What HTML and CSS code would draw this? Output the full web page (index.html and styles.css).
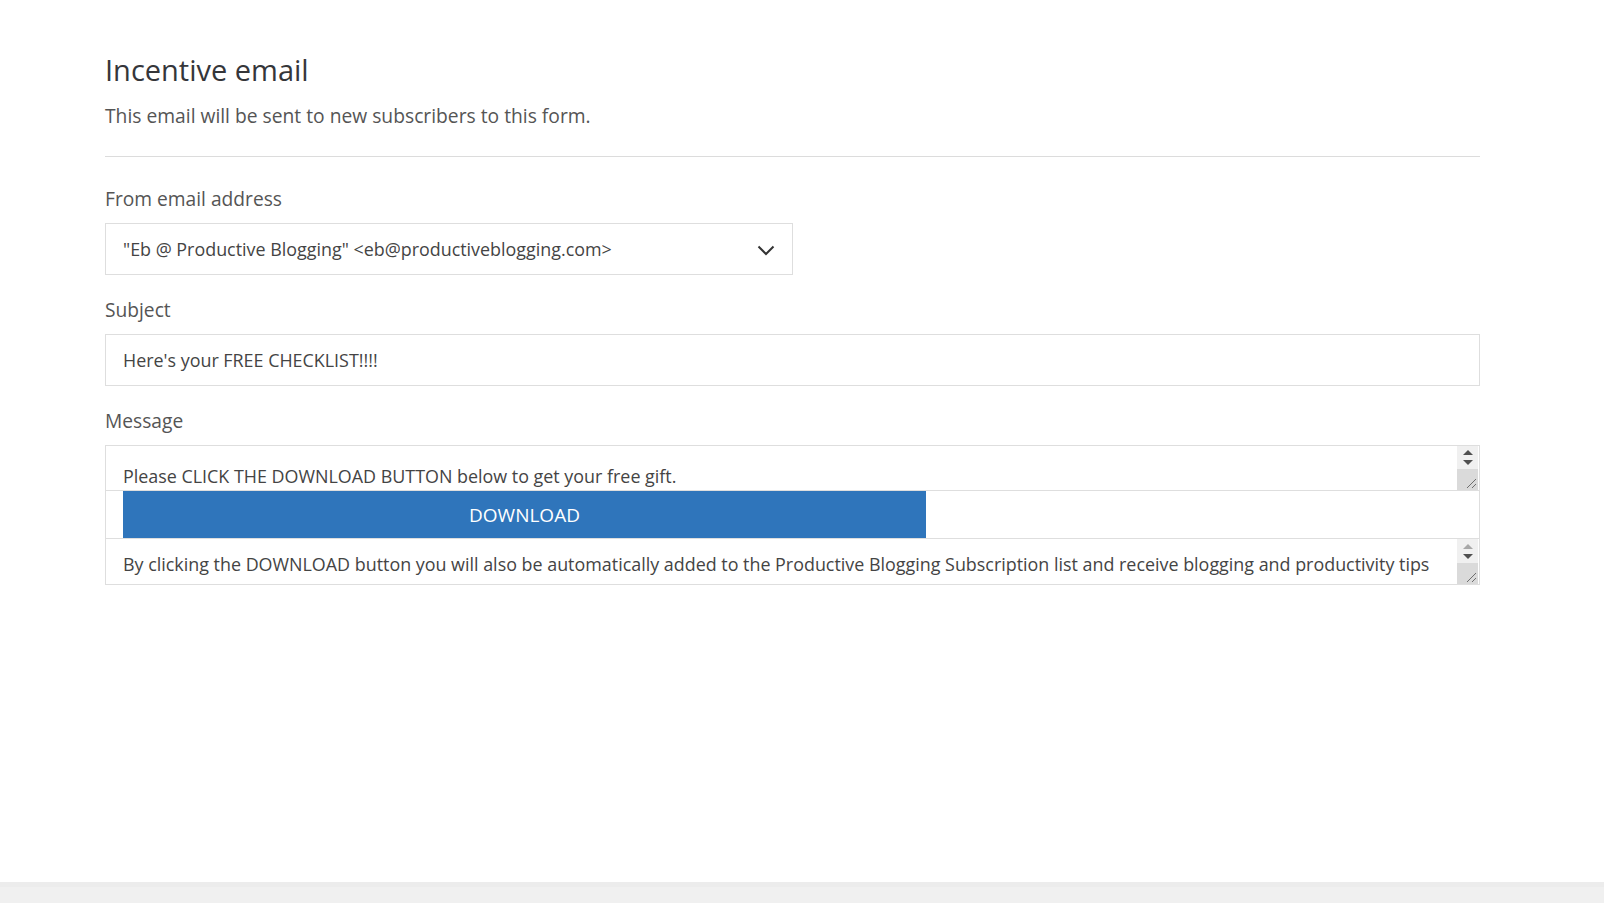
FILE: index.html
```html
<!DOCTYPE html>
<html lang="en">
<head>
<meta charset="utf-8">
<title>Incentive email</title>
<link rel="stylesheet" href="styles.css">
</head>
<body>
<div class="page">
  <main class="content">
    <h1 class="title">Incentive email</h1>
    <p class="subtitle">This email will be sent to new subscribers to this form.</p>
    <hr class="divider">

    <div class="field">
      <label class="label">From email address</label>
      <div class="select">
        <span class="select-text">"Eb @ Productive Blogging" &lt;eb@productiveblogging.com&gt;</span>
        <svg class="chevron" width="18" height="11" viewBox="0 0 18 11"><path d="M1.5 1.5 L9 9 L16.5 1.5" fill="none" stroke="#333" stroke-width="2"/></svg>
      </div>
    </div>

    <div class="field">
      <label class="label">Subject</label>
      <div class="input">Here's your FREE CHECKLIST!!!!</div>
    </div>

    <div class="field">
      <label class="label">Message</label>
      <div class="message">
        <div class="msg-part part-top">
          <div class="msg-text top-text">Please CLICK THE DOWNLOAD BUTTON below to get your free gift.</div>
          <div class="scrollbar">
            <div class="arrows">
              <span class="arrow-up"></span>
              <span class="arrow-down"></span>
            </div>
            <div class="grip">
              <svg width="21" height="21" viewBox="0 0 21 21"><path d="M19 10 L10 19 M19 15 L15 19" stroke="#6e6e6e" stroke-width="1" fill="none"/></svg>
            </div>
          </div>
        </div>
        <div class="msg-part part-button">
          <div class="download">DOWNLOAD</div>
        </div>
        <div class="msg-part part-bottom">
          <div class="msg-text bottom-text">By clicking the DOWNLOAD button you will also be automatically added to the Productive Blogging Subscription list and receive blogging and productivity tips</div>
          <div class="scrollbar">
            <div class="arrows">
              <span class="arrow-up disabled"></span>
              <span class="arrow-down"></span>
            </div>
            <div class="grip">
              <svg width="21" height="21" viewBox="0 0 21 21"><path d="M19 10 L10 19 M19 15 L15 19" stroke="#6e6e6e" stroke-width="1" fill="none"/></svg>
            </div>
          </div>
        </div>
      </div>
    </div>
  </main>
  <footer class="footer"></footer>
</div>
</body>
</html>
```

FILE: styles.css
```css
html, body {
  margin: 0;
  padding: 0;
  background: #fff;
}
body {
  font-family: "Open Sans", "Noto Sans", "Liberation Sans", sans-serif;
  color: #555;
}
.page {
  display: flex;
  flex-direction: column;
  height: 903px;
}
.content {
  flex: 1;
  padding: 51px 0 0 105px;
  width: 1375px;
}
.title {
  margin: 0;
  font-size: 29px;
  line-height: 38px;
  font-weight: 400;
  color: #35363a;
}
.subtitle {
  margin: 14px 0 0;
  font-size: 19.25px;
  line-height: 26px;
  color: #555;
}
.divider {
  margin: 27px 0 0;
  border: 0;
  border-top: 1px solid #dcdcdc;
  height: 0;
}
.field {
  display: flex;
  flex-direction: column;
}
.field:nth-of-type(1) { margin-top: 29px; }
.field + .field { margin-top: 22px; }
.label {
  font-size: 19.2px;
  line-height: 26px;
  color: #555;
  margin-bottom: 11px;
}
.select {
  width: 688px;
  height: 52px;
  box-sizing: border-box;
  border: 1px solid #dedede;
  display: flex;
  align-items: center;
  justify-content: space-between;
  padding: 0 17px 0 17px;
  font-size: 17.9px;
  line-height: 26px;
  color: #444;
}
.chevron { display: block; margin-top: 2px; }
.input {
  height: 52px;
  box-sizing: border-box;
  border: 1px solid #dedede;
  display: flex;
  align-items: center;
  padding: 0 17px;
  font-size: 17.9px;
  line-height: 26px;
  color: #444;
}
.message {
  border: 1px solid #dedede;
  display: flex;
  flex-direction: column;
  font-size: 17.9px;
  line-height: 26px;
  color: #444;
}
.msg-part {
  display: flex;
  overflow: hidden;
}
.msg-part + .msg-part { border-top: 1px solid #dedede; }
.part-top { height: 44px; }
.part-button { height: 47px; padding-left: 17px; }
.part-bottom { height: 45px; }
.msg-text {
  flex: 1;
  padding-left: 17px;
  white-space: nowrap;
  overflow: hidden;
}
.top-text { padding-top: 17px; }
.bottom-text { padding-top: 12px; }
.download {
  width: 803px;
  height: 47px;
  background: #2f75bb;
  color: #fff;
  display: flex;
  align-items: center;
  justify-content: center;
  font-size: 19px;
}
.scrollbar {
  width: 21px;
  display: flex;
  flex-direction: column;
  background: #f0f0f0;
  margin-right: 1px;
}
.arrows {
  flex: 1;
  display: flex;
  flex-direction: column;
  align-items: center;
  justify-content: center;
  gap: 5px;
}
.arrow-up, .arrow-down {
  width: 0;
  height: 0;
  border-left: 5px solid transparent;
  border-right: 5px solid transparent;
}
.arrow-up { border-bottom: 5px solid #505050; }
.arrow-down { border-top: 5px solid #505050; }
.arrow-up.disabled { border-bottom-color: #a8a8a8; }
.grip {
  height: 21px;
  background: #dadada;
}
.grip svg { display: block; }
.footer {
  height: 16px;
  background: #f0f0f0;
  border-top: 5px solid #ececec;
}
```
